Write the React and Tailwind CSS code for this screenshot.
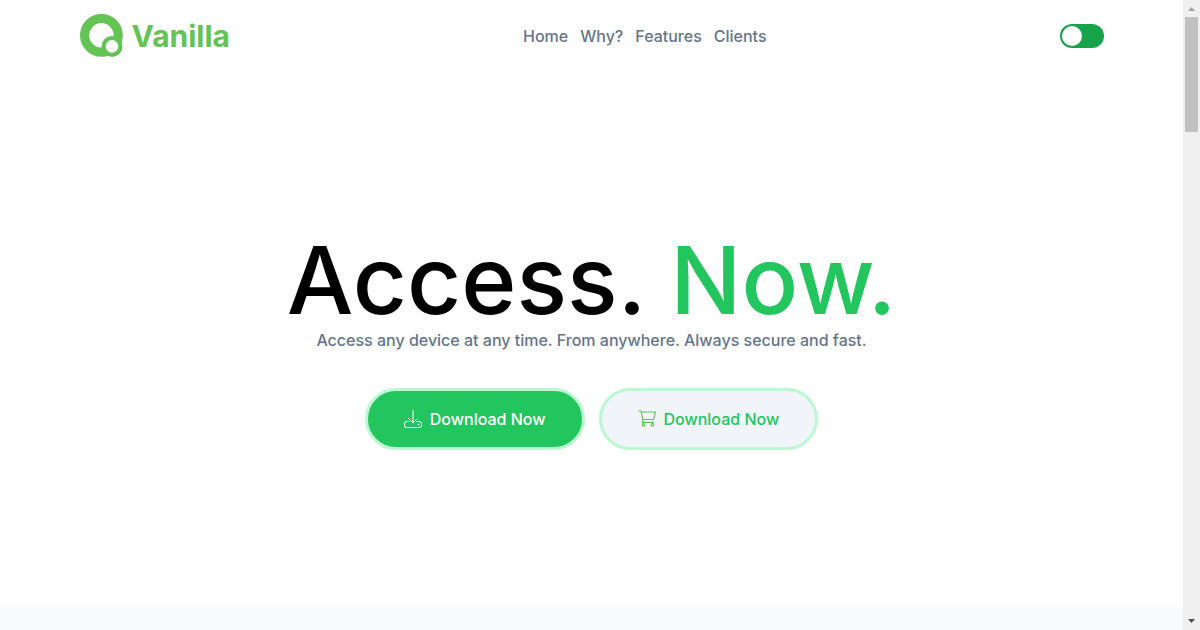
import { useState } from "react";

const links = ["Home", "Why?", "Features", "Clients"];

function Logo() {
  return (
    <a href="#home" className="flex items-center gap-2 text-[30px] leading-8 font-bold text-[#63c454]">
      <svg className="h-11 w-11 shrink-0" viewBox="0 0 44 44" aria-hidden="true">
        <circle cx="21.4" cy="21.3" r="16.8" fill="none" stroke="#63c454" strokeWidth="9.2" />
        <circle cx="32" cy="32.4" r="8.4" fill="#fff" stroke="#63c454" strokeWidth="4.2" />
      </svg>
      Vanilla
    </a>
  );
}

function DownloadIcon() {
  return (
    <svg className="h-[18px] w-[18px] shrink-0" viewBox="0 0 18 18" fill="none" stroke="currentColor" strokeLinecap="round" strokeLinejoin="round" aria-hidden="true">
      <path d="M9 .5v12M4.2 8.2L9 12.8l4.8-4.6" />
      <path d="M5 11.5H2.5a2 2 0 0 0-2 2v2a2 2 0 0 0 2 2h13a2 2 0 0 0 2-2v-2a2 2 0 0 0-2-2H13" />
      <path d="M14.4 14.5h.4" strokeWidth="1.3" />
    </svg>
  );
}

function CartIcon() {
  return (
    <svg className="h-[18px] w-[18px] shrink-0" viewBox="0 0 18 18" fill="none" stroke="#63c454" strokeWidth="1.2" strokeLinecap="round" strokeLinejoin="round" aria-hidden="true">
      <path d="M.6 1h2.5l1.7 8.5h10.7L17.4 2H3.3" />
      <path d="M4.8 9.5L4.3 12.4h11.4" />
      <circle cx="5.5" cy="14.8" r="1.3" />
      <circle cx="14.5" cy="14.8" r="1.3" />
    </svg>
  );
}

function Scrollbar() {
  return (
    <div className="flex w-[17px] shrink-0 flex-col items-center justify-between bg-[#f0f0f0]" aria-hidden="true">
      <div className="flex w-full flex-col items-center">
        <svg className="h-[17px] w-[17px]" viewBox="0 0 17 17"><path d="M5 11h7L8.5 7z" fill="#a3a3a3" /></svg>
        <div className="h-[115px] w-[13px] bg-[#c1c1c1]" />
      </div>
      <svg className="h-[17px] w-[17px]" viewBox="0 0 17 17"><path d="M5 6h7l-3.5 4z" fill="#505050" /></svg>
    </div>
  );
}

export default function App() {
  const [dark, setDark] = useState(false);
  return (
    <div className="flex h-screen bg-white font-['Inter',sans-serif] font-medium">
      <div className="flex min-w-0 flex-1 flex-col">
        <header className="mx-auto flex h-[72px] w-full max-w-5xl shrink-0 items-center justify-between">
          <Logo />
          <nav className="flex gap-3 text-base text-[#64748b]">
            {links.map((l) => (
              <a key={l} href="#home">{l}</a>
            ))}
          </nav>
          <label className="flex h-6 w-11 cursor-pointer items-center rounded-full bg-[#16a34a] p-0.5">
            <input type="checkbox" aria-label="Dark mode" className="peer sr-only" checked={dark} onChange={(e) => setDark(e.target.checked)} />
            <span className="h-5 w-5 rounded-full bg-white peer-checked:ml-auto" />
          </label>
        </header>
        <main id="home" className="flex flex-1 flex-col items-center justify-center pb-[62px] pt-16 text-center">
          <h1 className="text-[94px] leading-[96px] font-medium text-black">
            Access. <span className="text-[#22c55e]">Now.</span>
          </h1>
          <p className="text-base text-[#64748b]">
            Access any device at any time. From anywhere. Always secure and fast.
          </p>
          <div className="mt-9 flex gap-3.5">
            <button className="flex h-[62px] items-center gap-2 rounded-full border-3 border-[#bbf7d0] bg-[#22c55e] px-9 text-base text-white">
              <DownloadIcon />
              Download Now
            </button>
            <button className="flex h-[62px] items-center gap-2 rounded-full border-3 border-[#bbf7d0] bg-[#f1f5f9] px-9 text-base text-[#22c55e]">
              <CartIcon />
              Download Now
            </button>
          </div>
        </main>
        <section className="h-[23px] shrink-0 bg-[#f8fafc]" />
      </div>
      <Scrollbar />
    </div>
  );
}
